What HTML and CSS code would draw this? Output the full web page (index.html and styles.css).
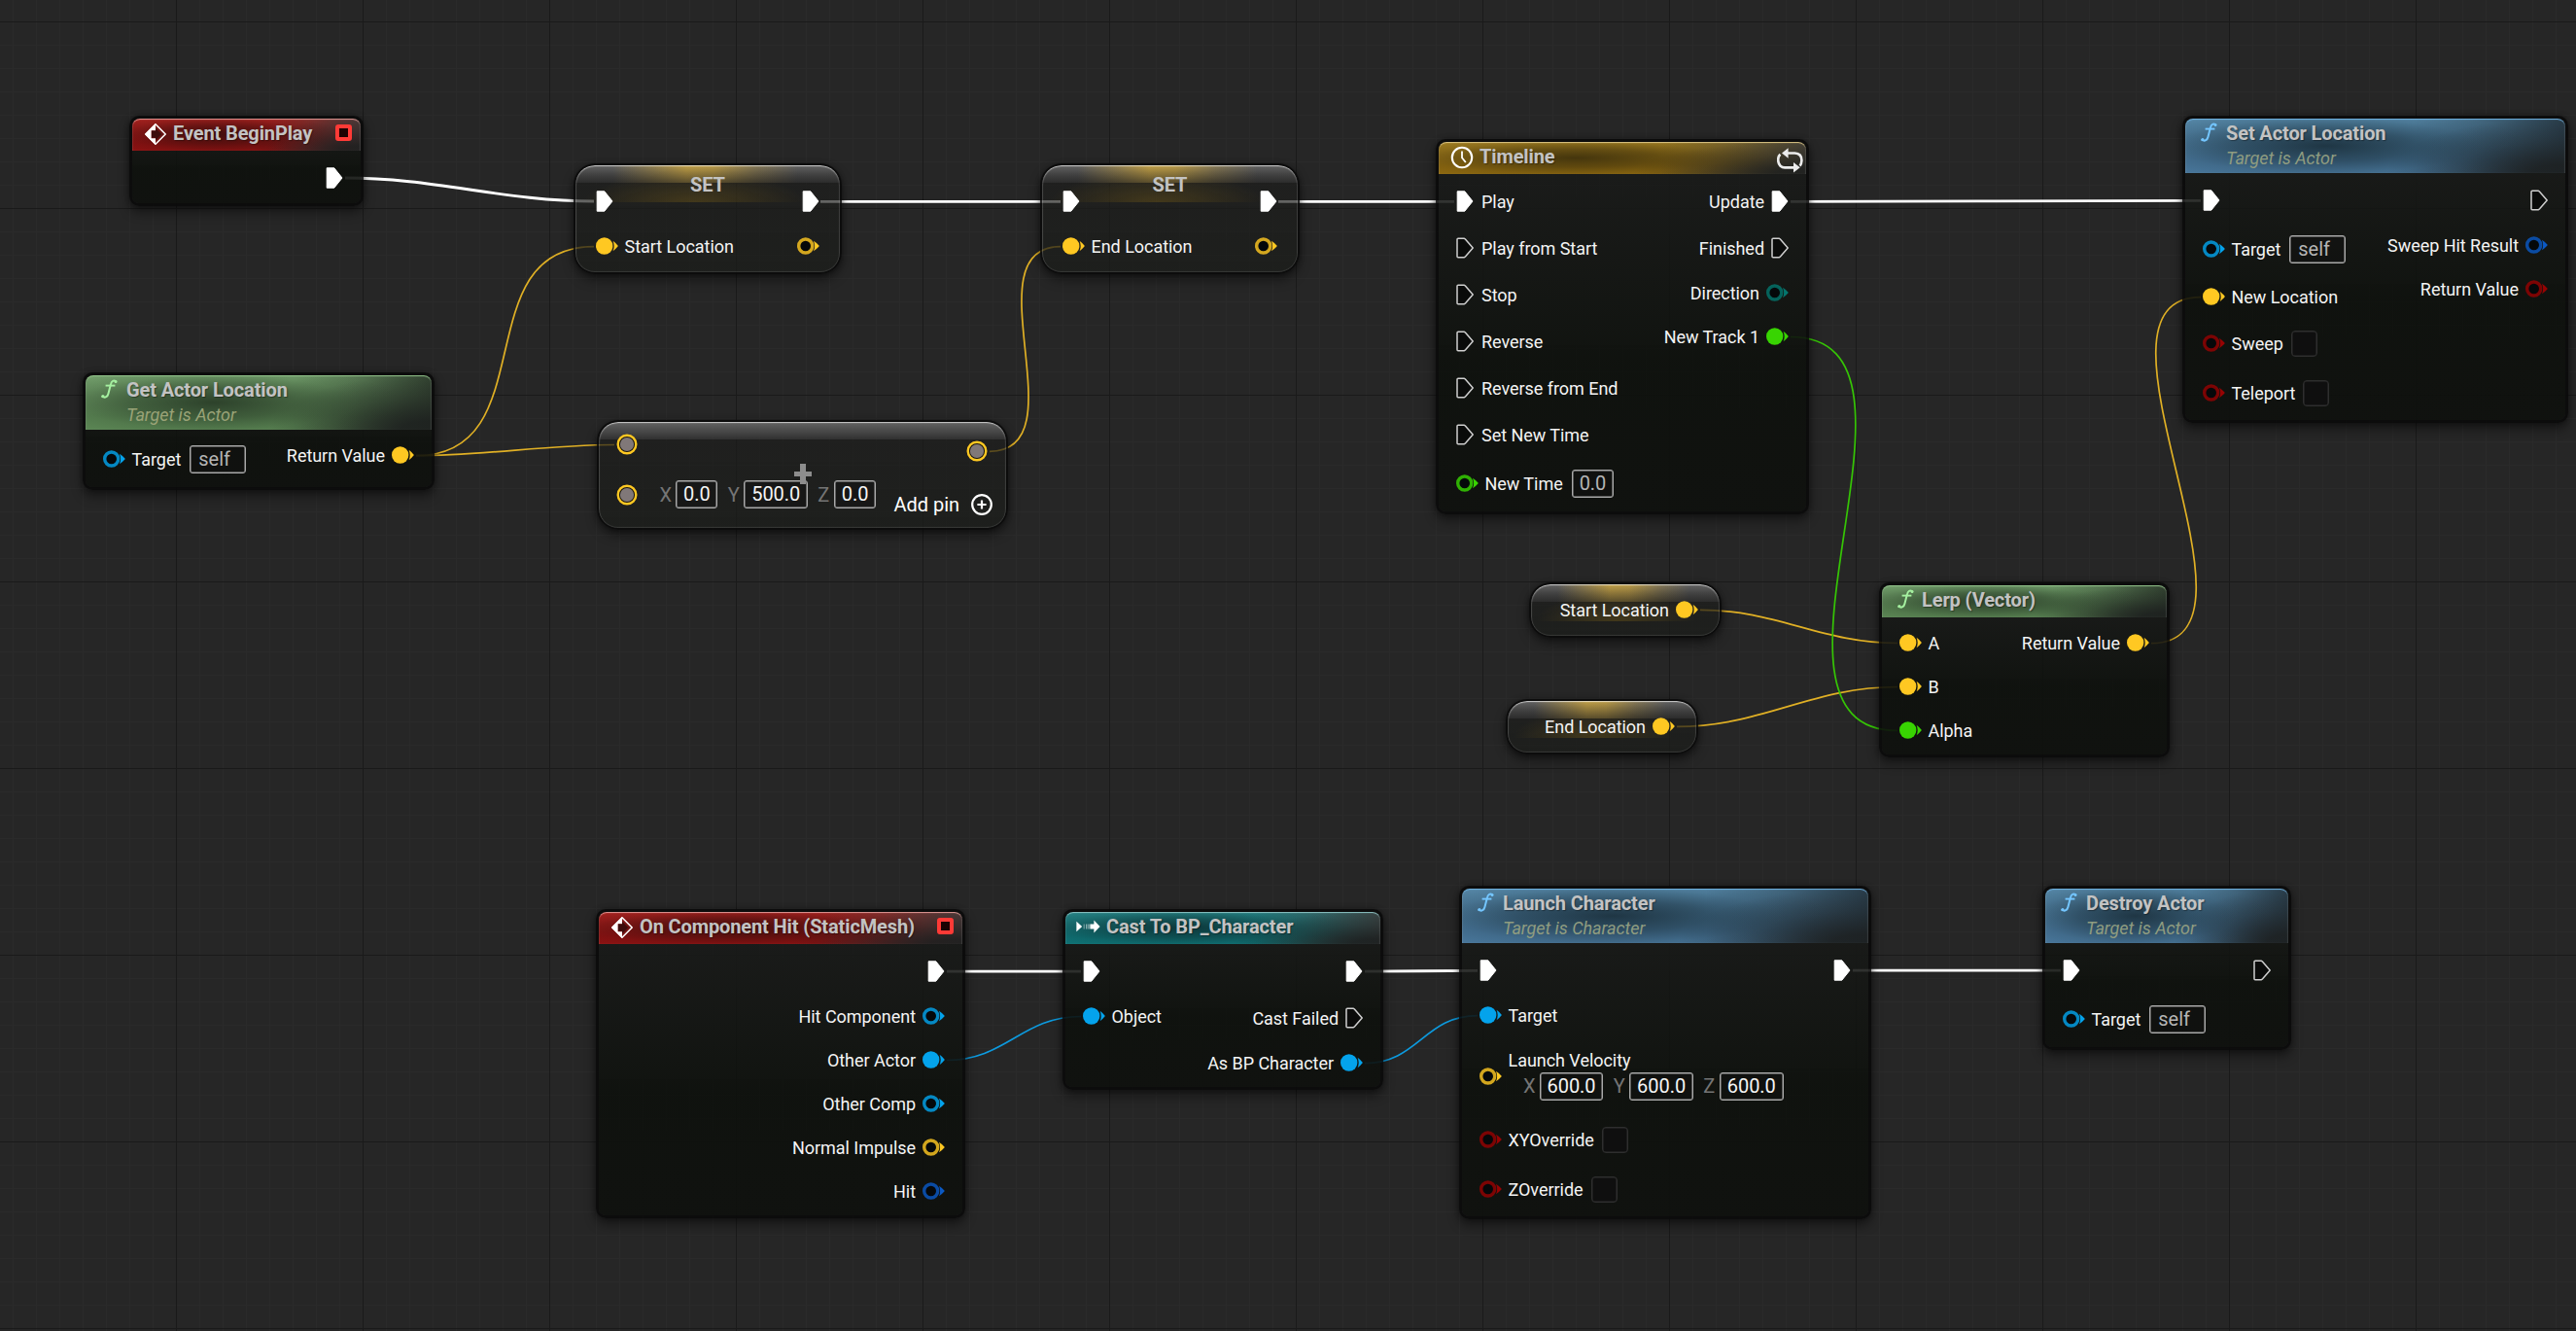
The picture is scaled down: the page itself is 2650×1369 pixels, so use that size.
FILE: index.html
```html
<!DOCTYPE html>
<html lang="en">
<head>
<meta charset="utf-8">
<title>Blueprint Event Graph</title>
<link rel="stylesheet" href="styles.css">
</head>
<body>
<svg class="defs" width="0" height="0" aria-hidden="true">
  <symbol id="exec-on" viewBox="0 0 18 22"><path d="M1.2 .8H8.8L17 11L8.8 21.2H1.2Z" fill="#fff" stroke="#fff" stroke-width="1" stroke-linejoin="round"/></symbol>
  <symbol id="exec-off" viewBox="0 0 18 22"><path d="M1 2.2Q1 1.2 2 1.2H8L9.6 2.2L17.2 11L9.6 19.8L8 20.8H2Q1 20.8 1 19.8Z" fill="#0a0b0a" stroke="#cfcfcf" stroke-width="1.5" stroke-linejoin="round"/></symbol>
  <symbol id="pin-on" viewBox="0 0 24 18"><circle cx="8.7" cy="9" r="8.7" fill="currentColor"/><path d="M17.6 3.8Q20.6 6 22.9 9Q20.6 12 17.6 14.2Q19.8 9 17.6 3.8Z" fill="currentColor"/></symbol>
  <symbol id="pin-off" viewBox="0 0 24 18"><circle cx="8.7" cy="9" r="7" fill="#05080a" stroke="currentColor" stroke-opacity=".82" stroke-width="3.4"/><path d="M17 3.8Q20.4 6 22.9 9Q20.4 12 17 14.2Q19.2 9 17 3.8Z" fill="currentColor"/></symbol>
  <symbol id="pin-round" viewBox="0 0 22 22"><circle cx="11" cy="11" r="9.3" fill="#161410" stroke="#ffc822" stroke-width="2.4"/><circle cx="11" cy="11" r="7.1" fill="#807878"/></symbol>
  <symbol id="event" viewBox="0 0 22 22"><path d="M11 .8L21.2 11L11 21.2L.8 11Z" fill="none" stroke="#fff" stroke-width="1.5"/><path d="M11 0L0 11L11 22V15.2H6.6V7.2H11Z" fill="#fff"/><path d="M11 4.8L17.2 11L11 17.2V14.6H7V7.6H11Z" fill="#3c0d0c"/></symbol>
  <symbol id="func" viewBox="0 0 17 20"><path d="M15.4 2.4C13 .8 10.8 1.6 10 5L7.4 15C6.7 18 4.2 19.6 1.4 18" fill="none" stroke="currentColor" stroke-width="2" stroke-linecap="round"/><path d="M4.6 6.6H14.4" stroke="currentColor" stroke-width="1.9"/><circle cx="1.9" cy="17.6" r="1.6" fill="currentColor"/><circle cx="15" cy="2.7" r="1.4" fill="currentColor"/></symbol>
  <symbol id="clock" viewBox="0 0 24 24"><circle cx="12" cy="12" r="10.2" fill="none" stroke="#fff" stroke-width="2.1"/><path d="M12 5.6V12.2L15.8 17" fill="none" stroke="#fff" stroke-width="1.8"/></symbol>
  <symbol id="loop" viewBox="0 0 27 26"><path d="M3.6 18.8C.4 15.4 .4 9.4 3.4 6.8M8 5.5H18.4C23.6 5.8 25.6 9 25.4 13.4Q25.2 16.6 23.6 18.6M3.6 18.8Q5.4 20.4 8 20.4H18" fill="none" stroke="#ececec" stroke-width="2.6"/><path d="M11.6 .2V10.8L5 5.5ZM17 15V25.6L23.8 20.3Z" fill="#ececec"/></symbol>
  <symbol id="cast" viewBox="0 0 25 14"><path d="M.4 1.8L6.2 7L.4 12.2Z" fill="#fff"/><path d="M7.6 4.6H8.8V9.4H7.6Z" fill="#fff" opacity=".4"/><path d="M10 4.6H11.4V9.4H10Z" fill="#fff" opacity=".5"/><path d="M12.4 4.6H13.6V9.4H12.4Z" fill="#fff" opacity=".6"/><path d="M14.4 4.4H18.4V.4L24.6 7L18.4 13.6V9.6H14.4Z" fill="#fff"/></symbol>
  <symbol id="add" viewBox="0 0 22 22"><circle cx="11" cy="11" r="9.8" fill="none" stroke="#fff" stroke-width="2.2"/><path d="M11 6.4V15.6M6.4 11H15.6" stroke="#fff" stroke-width="2.2"/></symbol>
</svg>

<main class="graph">
  <svg class="wires" width="2650" height="1369" viewBox="0 0 2650 1369">
    <g class="wire-exec">
      <path d="M355 183C448 183 518 207 611 207"/>
      <path d="M844 207.3H1091"/>
      <path d="M1315 207.3H1496"/>
      <path d="M1842 207.3C1983 207.3 2123 206.3 2264 206.3"/>
      <path d="M974 999.2H1112"/>
      <path d="M1404 999.2C1443 999.2 1481 998.3 1520 998.3"/>
      <path d="M1906 998.2H2120"/>
    </g>
    <g class="wire-vector">
      <path d="M428 468.7C561 468.7 478 253.7 611 253.7"/>
      <path d="M428 468.7C500 468.7 560 457.5 632 457.5"/>
      <path d="M1018 464.3C1113 464.3 996 253.7 1091 253.7"/>
      <path d="M1749 627.3C1828 627.3 1873 661.5 1952 661.5"/>
      <path d="M1725 747.3C1814 747.3 1863 706.5 1952 706.5"/>
      <path d="M2213 661.7C2349 661.7 2128 305.7 2264 305.7"/>
    </g>
    <path class="wire-float" d="M1842 346.5C2013 346.5 1781 751.5 1952 751.5"/>
    <g class="wire-object">
      <path d="M974 1090.5C1035 1090.5 1051 1045.5 1112 1045.5"/>
      <path d="M1404 1093.7C1459 1093.7 1465 1044.7 1520 1044.7"/>
    </g>
  </svg>

  <section class="node begin-play">
    <header class="head red"><svg class="ico-event"><use href="#event"/></svg><h2>Event BeginPlay</h2><i class="delegate"></i></header>
    <div class="body"><div class="ins"></div><div class="outs">
      <div class="pin exec"><svg><use href="#exec-on"/></svg></div>
    </div></div>
  </section>

  <section class="node get-location">
    <header class="head green tall"><svg class="ico-func"><use href="#func"/></svg><div><h2>Get Actor Location</h2><p>Target is Actor</p></div></header>
    <div class="body"><div class="ins">
      <div class="pin field object"><svg><use href="#pin-off"/></svg><span>Target</span><b class="self">self</b></div>
    </div><div class="outs">
      <div class="pin vector"><span>Return Value</span><svg><use href="#pin-on"/></svg></div>
    </div></div>
  </section>

  <section class="node var set-start">
    <h2>SET</h2>
    <div class="body"><div class="ins">
      <div class="pin exec"><svg><use href="#exec-on"/></svg></div>
      <div class="pin vector"><svg><use href="#pin-on"/></svg><span>Start Location</span></div>
    </div><div class="outs">
      <div class="pin exec"><svg><use href="#exec-on"/></svg></div>
      <div class="pin vector"><svg><use href="#pin-off"/></svg></div>
    </div></div>
  </section>

  <section class="node var set-end">
    <h2>SET</h2>
    <div class="body"><div class="ins">
      <div class="pin exec"><svg><use href="#exec-on"/></svg></div>
      <div class="pin vector"><svg><use href="#pin-on"/></svg><span>End Location</span></div>
    </div><div class="outs">
      <div class="pin exec"><svg><use href="#exec-on"/></svg></div>
      <div class="pin vector"><svg><use href="#pin-off"/></svg></div>
    </div></div>
  </section>

  <section class="node math">
    <div class="body"><div class="ins">
      <div class="round"><svg><use href="#pin-round"/></svg></div>
      <div class="round second"><svg><use href="#pin-round"/></svg>
        <div class="vec"><label><em>X</em><b>0.0</b></label><label><em>Y</em><b>500.0</b></label><label><em>Z</em><b>0.0</b></label></div>
      </div>
    </div><div class="outs">
      <div class="round result"><svg><use href="#pin-round"/></svg></div>
      <div class="add-pin"><span>Add pin</span><svg><use href="#add"/></svg></div>
    </div></div>
    <i class="plus"></i>
  </section>

  <section class="node timeline">
    <header class="head gold"><svg class="ico-clock"><use href="#clock"/></svg><h2>Timeline</h2><svg class="ico-loop"><use href="#loop"/></svg></header>
    <div class="body"><div class="ins">
      <div class="pin exec"><svg><use href="#exec-on"/></svg><span>Play</span></div>
      <div class="pin exec"><svg><use href="#exec-off"/></svg><span>Play from Start</span></div>
      <div class="pin exec"><svg><use href="#exec-off"/></svg><span>Stop</span></div>
      <div class="pin exec"><svg><use href="#exec-off"/></svg><span>Reverse</span></div>
      <div class="pin exec"><svg><use href="#exec-off"/></svg><span>Reverse from End</span></div>
      <div class="pin exec"><svg><use href="#exec-off"/></svg><span>Set New Time</span></div>
      <div class="pin field float"><svg><use href="#pin-off"/></svg><span>New Time</span><b class="gray">0.0</b></div>
    </div><div class="outs">
      <div class="pin exec"><span>Update</span><svg><use href="#exec-on"/></svg></div>
      <div class="pin exec"><span>Finished</span><svg><use href="#exec-off"/></svg></div>
      <div class="pin enum"><span>Direction</span><svg><use href="#pin-off"/></svg></div>
      <div class="pin float"><span>New Track 1</span><svg><use href="#pin-on"/></svg></div>
    </div></div>
  </section>

  <section class="node set-location">
    <header class="head blue tall"><svg class="ico-func"><use href="#func"/></svg><div><h2>Set Actor Location</h2><p>Target is Actor</p></div></header>
    <div class="body"><div class="ins">
      <div class="pin exec"><svg><use href="#exec-on"/></svg></div>
      <div class="pin field object"><svg><use href="#pin-off"/></svg><span>Target</span><b class="self">self</b></div>
      <div class="pin vector"><svg><use href="#pin-on"/></svg><span>New Location</span></div>
      <div class="pin check bool"><svg><use href="#pin-off"/></svg><span>Sweep</span><i></i></div>
      <div class="pin check bool"><svg><use href="#pin-off"/></svg><span>Teleport</span><i></i></div>
    </div><div class="outs">
      <div class="pin exec"><svg><use href="#exec-off"/></svg></div>
      <div class="pin struct"><span>Sweep Hit Result</span><svg><use href="#pin-off"/></svg></div>
      <div class="pin bool"><span>Return Value</span><svg><use href="#pin-off"/></svg></div>
    </div></div>
  </section>

  <section class="node var getter get-start">
    <div class="pin vector"><span>Start Location</span><svg><use href="#pin-on"/></svg></div>
  </section>

  <section class="node var getter get-end">
    <div class="pin vector"><span>End Location</span><svg><use href="#pin-on"/></svg></div>
  </section>

  <section class="node lerp">
    <header class="head green"><svg class="ico-func"><use href="#func"/></svg><h2>Lerp (Vector)</h2></header>
    <div class="body"><div class="ins">
      <div class="pin vector"><svg><use href="#pin-on"/></svg><span>A</span></div>
      <div class="pin vector"><svg><use href="#pin-on"/></svg><span>B</span></div>
      <div class="pin float"><svg><use href="#pin-on"/></svg><span>Alpha</span></div>
    </div><div class="outs">
      <div class="pin vector"><span>Return Value</span><svg><use href="#pin-on"/></svg></div>
    </div></div>
  </section>

  <section class="node on-hit">
    <header class="head red"><svg class="ico-event"><use href="#event"/></svg><h2>On Component Hit (StaticMesh)</h2><i class="delegate"></i></header>
    <div class="body"><div class="ins"></div><div class="outs">
      <div class="pin exec"><svg><use href="#exec-on"/></svg></div>
      <div class="pin object"><span>Hit Component</span><svg><use href="#pin-off"/></svg></div>
      <div class="pin object"><span>Other Actor</span><svg><use href="#pin-on"/></svg></div>
      <div class="pin object"><span>Other Comp</span><svg><use href="#pin-off"/></svg></div>
      <div class="pin vector"><span>Normal Impulse</span><svg><use href="#pin-off"/></svg></div>
      <div class="pin struct"><span>Hit</span><svg><use href="#pin-off"/></svg></div>
    </div></div>
  </section>

  <section class="node cast">
    <header class="head teal"><svg class="ico-cast"><use href="#cast"/></svg><h2>Cast To BP_Character</h2></header>
    <div class="body"><div class="ins">
      <div class="pin exec"><svg><use href="#exec-on"/></svg></div>
      <div class="pin object"><svg><use href="#pin-on"/></svg><span>Object</span></div>
    </div><div class="outs">
      <div class="pin exec"><svg><use href="#exec-on"/></svg></div>
      <div class="pin exec"><span>Cast Failed</span><svg><use href="#exec-off"/></svg></div>
      <div class="pin object"><span>As BP Character</span><svg><use href="#pin-on"/></svg></div>
    </div></div>
  </section>

  <section class="node launch">
    <header class="head blue tall"><svg class="ico-func"><use href="#func"/></svg><div><h2>Launch Character</h2><p>Target is Character</p></div></header>
    <div class="body"><div class="ins">
      <div class="pin exec"><svg><use href="#exec-on"/></svg></div>
      <div class="pin object"><svg><use href="#pin-on"/></svg><span>Target</span></div>
      <div class="pin velocity vector"><svg><use href="#pin-off"/></svg>
        <div><span>Launch Velocity</span>
        <div class="vec"><label><em>X</em><b>600.0</b></label><label><em>Y</em><b>600.0</b></label><label><em>Z</em><b>600.0</b></label></div></div>
      </div>
      <div class="pin check bool"><svg><use href="#pin-off"/></svg><span>XYOverride</span><i></i></div>
      <div class="pin check bool"><svg><use href="#pin-off"/></svg><span>ZOverride</span><i></i></div>
    </div><div class="outs">
      <div class="pin exec"><svg><use href="#exec-on"/></svg></div>
    </div></div>
  </section>

  <section class="node destroy">
    <header class="head blue tall"><svg class="ico-func"><use href="#func"/></svg><div><h2>Destroy Actor</h2><p>Target is Actor</p></div></header>
    <div class="body"><div class="ins">
      <div class="pin exec"><svg><use href="#exec-on"/></svg></div>
      <div class="pin field object"><svg><use href="#pin-off"/></svg><span>Target</span><b class="self">self</b></div>
    </div><div class="outs">
      <div class="pin exec"><svg><use href="#exec-off"/></svg></div>
    </div></div>
  </section>
</main>
</body>
</html>
```
FILE: styles.css
```css
* { box-sizing: border-box; }
body { margin: 0; background: #262626; font: 18px/24px Roboto, "Liberation Sans", sans-serif; letter-spacing: -.04px; color: #f2f2f2; }
h2, p { margin: 0; white-space: nowrap; }
h2 { font-size: 20px; line-height: 24px; font-weight: 700; letter-spacing: -.12px; color: #c3c3c3; }
svg { display: block; flex: none; }
.defs { position: absolute; }

/* Canvas: 24px minor grid, 192px major grid */
.graph {
  position: relative; width: 2650px; height: 1369px; overflow: hidden;
  background-color: #262626;
  background-image:
    linear-gradient(90deg, #1a1a1a 1px, transparent 1px),
    linear-gradient(#1a1a1a 1px, transparent 1px),
    linear-gradient(90deg, #2a2a2a 1px, transparent 1px),
    linear-gradient(#2a2a2a 1px, transparent 1px);
  background-size: 192px 192px, 192px 192px, 24px 24px, 24px 24px;
  background-position: 181px 0, 0 22px, 13px 0, 0 22px;
}
.wires { position: absolute; left: 0; top: 0; fill: none; }
.wire-exec { stroke: #fff; stroke-width: 2.8; }
.wire-vector { stroke: #e0b025; stroke-width: 1.7; }
.wire-float { stroke: #35c405; stroke-width: 1.7; }
.wire-object { stroke: #0d9ade; stroke-width: 1.7; }

/* Nodes */
.node {
  position: absolute; border: 3px solid rgba(9, 9, 9, .88); border-radius: 10px;
  background: linear-gradient(rgba(27, 28, 27, .88), rgba(14, 17, 13, .9) 60%, rgba(14, 16, 13, .92)) padding-box;
  box-shadow: 0 6px 12px rgba(0, 0, 0, .45), 0 0 5px rgba(0, 0, 0, .35);
}
.begin-play { left: 133px; top: 119px; width: 241px; }
.get-location { left: 85px; top: 383px; width: 362px; }
.set-start { left: 590px; top: 168px; width: 276px; }
.set-end { left: 1070px; top: 168px; width: 267px; }
.math { left: 614px; top: 432px; width: 423px; }
.timeline { left: 1477px; top: 143px; width: 384px; }
.set-location { left: 2245px; top: 119px; width: 397px; }
.get-start { left: 1573px; top: 599px; width: 198px; }
.get-end { left: 1549px; top: 719px; width: 198px; }
.lerp { left: 1933px; top: 599px; width: 299px; }
.on-hit { left: 613px; top: 935px; width: 380px; }
.cast { left: 1093px; top: 935px; width: 330px; }
.launch { left: 1501px; top: 911px; width: 424px; }
.destroy { left: 2101px; top: 911px; width: 256px; }

/* Title bars */
.head {
  display: flex; height: 33px; padding: 3px 9px 0 13px;
  border-radius: 8px 8px 0 0;
  background:
    radial-gradient(ellipse 55% 66% at 37% 50%, var(--deep), color-mix(in srgb, var(--deep) 62%, transparent) 42%, color-mix(in srgb, var(--deep) 18%, transparent) 75%, transparent),
    radial-gradient(ellipse 45% 100% at 98% 100%, rgba(28, 30, 30, .85) 15%, rgba(28, 30, 30, .35) 60%, transparent),
    linear-gradient(90deg, transparent 60%, var(--end) 104%),
    linear-gradient(var(--top), var(--base) 75%);
  box-shadow: inset 0 2px 1px -1px var(--shine), inset 1px 0 1px rgba(255, 255, 255, .1), inset -1px 0 1px rgba(255, 255, 255, .12);
}
.head.tall { height: 56px; padding-left: 16px; }
.head h2 { text-shadow: 1px 1px 1px rgba(0, 0, 0, .35); }
.head p { margin-top: 2px; font-style: italic; color: #9aa377; }
.head > svg + h2, .head > svg + div { margin-left: 7px; }
.red { --deep: #430e0d; --top: #a82320; --base: #8c1212; --end: #403b3a; --shine: #e09a96; }
.green { --deep: #2d422b; --top: #75a26e; --base: #5b8654; --end: #2b382a; --shine: #93c48b; color: #a5f0a0; }
.blue { --deep: #1f3644; --top: #5688a8; --base: #48769a; --end: #24343f; --shine: #6fb4e4; color: #74c6ff; }
.teal { --deep: #0d383b; --top: #278486; --base: #0f7275; --end: #3c3c3c; --shine: #8cc4c4; }
.gold { --deep: #45360d; --top: #a07e22; --base: #8d6810; --end: #3b3a38; --shine: #dcc685; }
.head.blue p { color: #8f9c80; }
.ico-event { width: 22px; height: 22px; margin-top: 2px; }
.ico-func { width: 17px; height: 20px; margin: 1px 2px 0 0; }
.lerp .head { padding-left: 16px; }
.lerp .head h2 { margin-left: 6px; }
.ico-clock { width: 24px; height: 24px; margin: 1px 0 0 -1px; }
.head .ico-clock + h2 { margin-left: 6px; }
.ico-loop { width: 27px; height: 26px; margin: 3px -6px 0 auto; }
.ico-cast { width: 25px; height: 14px; margin: 5px 0 0 -2px; }
.head .ico-cast + h2 { margin-left: 6px; }
.delegate { width: 17px; height: 17px; margin: 3px 0 0 auto; border: 4px solid #ff3a36; border-radius: 3px; background: #1c0202; }

/* Pins */
.body { display: flex; justify-content: space-between; padding: 4px 18px 2px; }
.outs { display: flex; flex-direction: column; align-items: flex-end; }
.pin { display: flex; align-items: center; gap: 6px; height: 45px; white-space: nowrap; }
.pin span { color: #f4f4f4; }
.pin svg { width: 24px; height: 18px; }
.outs .pin svg, .getter .pin svg { margin-right: -1px; }
.ins .pin:not(.exec) > svg { margin-left: -.5px; }
.pin.exec { height: 48px; gap: 8px; }
.pin.exec span { padding-top: 2px; }
.pin.exec svg { width: 18px; height: 22px; }
.outs .pin.exec svg { margin-right: 0; }
.outs .pin { gap: 7px; }
.pin:not(.exec) > svg { position: relative; top: -.5px; }
.field { height: 53px; }
.check { height: 51px; }
.check i { width: 27px; height: 27px; margin-left: 2px; border: 1px solid #2e2e2e; box-shadow: inset 0 0 0 .5px #2e2e2e; border-radius: 4px; background: #0f0f0f; }
.pin b, .vec b {
  height: 29px; padding: 0 7px; border: 1px solid #a9a9a9; border-radius: 3px; box-shadow: inset 0 0 0 .5px #a9a9a9;
  font-weight: 400; font-size: 20px; line-height: 26px; color: #f5f5f5; background: rgba(15, 15, 15, .5);
}
.pin > b { margin-left: 3px; }
.pin .self { width: 58px; padding-left: 8px; color: #b5b5b5; }
.pin .gray { color: #b5b5b5; }
.vec { display: flex; gap: 10.3px; }
.vec label { display: flex; align-items: center; }
.vec b { padding: 0 6.8px; }
.vec em { width: 16.7px; font-style: normal; font-size: 20px; color: #757575; }
.velocity { height: 80px; }
.velocity > div { padding-bottom: 4px; }
.velocity span { display: block; }
.velocity .vec { padding-left: 15.5px; }

.object { color: #04a3ec; }
.vector { color: #ffc822; }
.float { color: #38d402; }
.bool { color: #960303; }
.struct { color: #0b59c4; }
.enum { color: #04756d; }

/* Rounded glossy nodes */
.var, .math {
  display: grid; border: 2px solid rgba(9, 9, 9, .88); border-radius: 22px;
  background:
    linear-gradient(rgba(20, 20, 20, 0), rgba(26, 26, 26, .62)) 0 0 / 100% 18px no-repeat padding-box,
    linear-gradient(90deg, transparent 14%, rgba(205, 168, 70, .5) 30%, rgba(205, 168, 70, .9) 42%, rgba(205, 168, 70, .85) 52%, rgba(205, 168, 70, .35) 68%, transparent 84%) 0 0 / 100% 18px no-repeat padding-box,
    linear-gradient(rgba(118, 118, 118, .8), rgba(84, 84, 84, .8)) 0 0 / 100% 18px no-repeat padding-box,
    radial-gradient(ellipse 42% 150% at 45% 100%, rgba(150, 115, 20, .3), transparent) 0 18px / 100% 20px no-repeat padding-box,
    linear-gradient(rgba(29, 29, 28, .65), rgba(27, 29, 26, .75)) padding-box;
  box-shadow: inset 0 2px 1px -1px rgba(255, 255, 255, .5), inset 1px 1px 1px rgba(255, 255, 255, .18),
    inset -1px 1px 1px rgba(255, 255, 255, .14), inset 0 -1px 1px rgba(255, 255, 255, .12),
    0 6px 12px rgba(0, 0, 0, .4), 0 1px 5px rgba(0, 0, 0, .4);
}
.math {
  background:
    linear-gradient(rgba(112, 112, 112, .85), rgba(56, 56, 56, .7)) 0 0 / 100% 18px no-repeat padding-box,
    linear-gradient(rgba(29, 29, 28, .65), rgba(27, 29, 26, .75)) padding-box;
}
.var > *, .math > * { grid-area: 1 / 1; }
.var h2 { justify-self: center; margin-top: 8px; }
.var .body { padding: 13px 21px 4px; }
.getter { height: 57px; align-items: center; justify-items: end; padding: 0 22px 0; }
.getter .pin { gap: 7px; }

.math .body { padding: 1px 19px 5px 17.5px; }
.round { display: flex; align-items: center; height: 44px; }
.round svg, .add-pin svg { width: 22px; height: 22px; }
.second { height: 59px; gap: 23px; }
.result { height: 58px; }
.add-pin { display: flex; align-items: center; gap: 12px; height: 44px; padding-top: 7px; margin-right: -5px; font-size: 20px; color: #fff; }
.plus {
  place-self: center; width: 18px; height: 21px; margin-top: -2px; z-index: 1;
  background:
    linear-gradient(#8d8d8d, #8d8d8d) center / 6px 100% no-repeat,
    linear-gradient(#8d8d8d, #8d8d8d) center / 100% 5px no-repeat;
}
```
